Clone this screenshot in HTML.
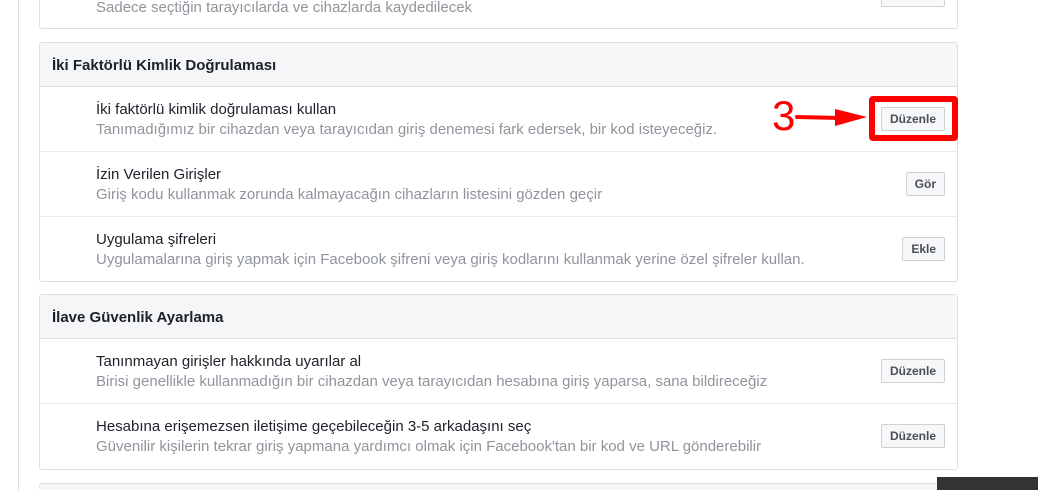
<!DOCTYPE html>
<html><head><meta charset="utf-8"><style>
*{margin:0;padding:0;box-sizing:border-box}
html,body{width:1038px;height:490px;overflow:hidden}
body{background:#fff;position:relative;font-family:"Liberation Sans",Arial,sans-serif}
.vl{position:absolute;left:18px;top:0;width:1px;height:490px;background:#dadde1}
.card{position:absolute;left:39px;width:919px;border:1px solid #dddfe2;border-radius:3px;background:#fff}
.hd{height:44px;background:#f5f6f7;border-bottom:1px solid #dddfe2;font-weight:bold;font-size:15px;color:#1d2129;padding-left:12px;line-height:45px}
.row{height:65px;position:relative;border-bottom:1px solid #e9ebee}
.row:last-child{border-bottom:none}
.t{position:absolute;left:56px;top:14px;font-size:15px;color:#1d2129;white-space:nowrap}
.s{position:absolute;left:56px;top:34px;font-size:15px;color:#90949c;white-space:nowrap}
.b{position:absolute;right:12px;top:20px;height:24px;padding:0 8px;border:1px solid #ced0d4;border-radius:2px;background:#f6f7f9;font-weight:bold;font-size:12px;color:#4b4f56;line-height:22px}
</style></head><body>
<div class="vl"></div>
<div class="card" style="top:-40px;height:69px;border-top:none">
 <div class="s" style="top:39px;left:56px">Sadece seçtiğin tarayıcılarda ve cihazlarda kaydedilecek</div>
 <div class="b" style="top:35px;height:12px;width:64px;border-top:none"></div>
</div>
<div class="card" style="top:42px;height:240px">
 <div class="hd">İki Faktörlü Kimlik Doğrulaması</div>
 <div class="row"><div class="t">İki faktörlü kimlik doğrulaması kullan</div><div class="s">Tanımadığımız bir cihazdan veya tarayıcıdan giriş denemesi fark edersek, bir kod isteyeceğiz.</div><div class="b">Düzenle</div></div>
 <div class="row"><div class="t">İzin Verilen Girişler</div><div class="s">Giriş kodu kullanmak zorunda kalmayacağın cihazların listesini gözden geçir</div><div class="b">Gör</div></div>
 <div class="row"><div class="t">Uygulama şifreleri</div><div class="s">Uygulamalarına giriş yapmak için Facebook şifreni veya giriş kodlarını kullanmak yerine özel şifreler kullan.</div><div class="b">Ekle</div></div>
</div>
<div class="card" style="top:294px;height:176px">
 <div class="hd">İlave Güvenlik Ayarlama</div>
 <div class="row"><div class="t">Tanınmayan girişler hakkında uyarılar al</div><div class="s">Birisi genellikle kullanmadığın bir cihazdan veya tarayıcıdan hesabına giriş yaparsa, sana bildireceğiz</div><div class="b">Düzenle</div></div>
 <div class="row"><div class="t">Hesabına erişemezsen iletişime geçebileceğin 3-5 arkadaşını seç</div><div class="s">Güvenilir kişilerin tekrar giriş yapmana yardımcı olmak için Facebook'tan bir kod ve URL gönderebilir</div><div class="b">Düzenle</div></div>
</div>
<div class="card" style="top:483px;height:7px;background:#f5f6f7;border-bottom:none"></div>
<div style="position:absolute;left:937px;top:477px;width:101px;height:13px;background:#333"></div>
<div style="position:absolute;left:869px;top:96px;width:89px;height:45px;border:6px solid #f00;border-radius:4px"></div>
<div style="position:absolute;left:772px;top:92px;font-size:42px;color:#f00;line-height:48px;font-family:'Liberation Sans',sans-serif">3</div>
<svg style="position:absolute;left:795px;top:105px" width="75" height="25"><line x1="2" y1="12" x2="45" y2="13" stroke="#f00" stroke-width="4" stroke-linecap="round"/><polygon points="40,4 72,12 40,21" fill="#f00"/></svg>
</body></html>
